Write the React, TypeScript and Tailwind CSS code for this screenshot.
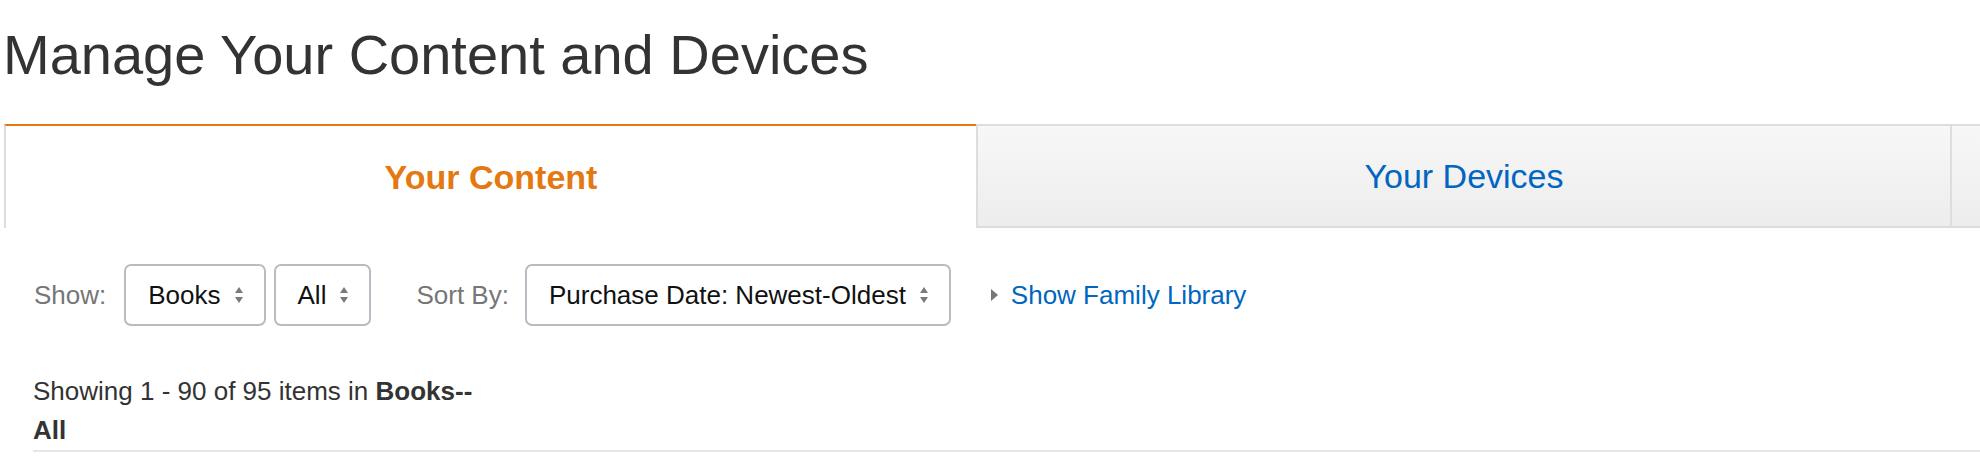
import React from "react";

function UpDown() {
  return (
    <svg width="10" height="18" viewBox="0 0 10 18" className="shrink-0">
      <path d="M5 1 L9 7 L1 7 Z" fill="#7a7a7a" />
      <path d="M5 17 L9 11 L1 11 Z" fill="#7a7a7a" />
    </svg>
  );
}

function Select({ label }: { label: string }) {
  return (
    <div className="h-[62px] flex items-center border-2 border-[#b8bcc2] rounded-[7px] bg-white pl-[22px] pr-[20px] gap-[13px]">
      <span className="text-[26px] text-[#111] leading-none">{label}</span>
      <UpDown />
    </div>
  );
}

export default function App() {
  return (
    <div
      className="w-[1980px] h-[476px] bg-white overflow-hidden"
      style={{ fontFamily: '"Liberation Sans", Arial, Helvetica, sans-serif' }}
    >
      <h1 className="pt-[23px] ml-[3px] text-[56px] leading-[64px] text-[#333] font-normal">
        Manage Your Content and Devices
      </h1>

      <div className="mt-[37px] ml-[4px] flex h-[104px]">
        <div className="w-[972px] h-[104px] border-l-2 border-l-[#ddd] border-t-2 border-t-[#e47911] bg-white flex items-center justify-center">
          <span className="text-[34px] font-bold text-[#e47911]">Your Content</span>
        </div>
        <div className="w-[974px] h-[104px] border-l-2 border-t-2 border-b-2 border-[#ddd] bg-gradient-to-b from-[#f7f7f7] to-[#ededed] flex items-center justify-center">
          <span className="text-[34px] text-[#0066c0]">Your Devices</span>
        </div>
        <div className="flex-1 h-[104px] border-l-2 border-t-2 border-b-2 border-[#ddd] bg-gradient-to-b from-[#f7f7f7] to-[#ededed]" />
      </div>

      <div className="mt-[36px] ml-[34px] flex items-center h-[62px]">
        <span className="text-[26px] text-[#767676] mr-[18px]">Show:</span>
        <Select label="Books" />
        <div className="w-[8px]" />
        <Select label="All" />
        <span className="text-[26px] text-[#767676] ml-[45px] mr-[16px]">Sort By:</span>
        <Select label="Purchase Date: Newest-Oldest" />
        <svg width="9" height="14" viewBox="0 0 9 14" className="ml-[39px] shrink-0">
          <path d="M1 1 L8 7 L1 13 Z" fill="#777" />
        </svg>
        <span className="ml-[12px] text-[26px] text-[#0066c0]">Show Family Library</span>
      </div>

      <div className="mt-[46px] ml-[33px] border-b-2 border-[#e7e7e7] text-[26px] leading-[39px] text-[#333]">
        Showing 1 - 90 of 95 items in <b>Books--</b>
        <br />
        <b>All</b>
      </div>
    </div>
  );
}
